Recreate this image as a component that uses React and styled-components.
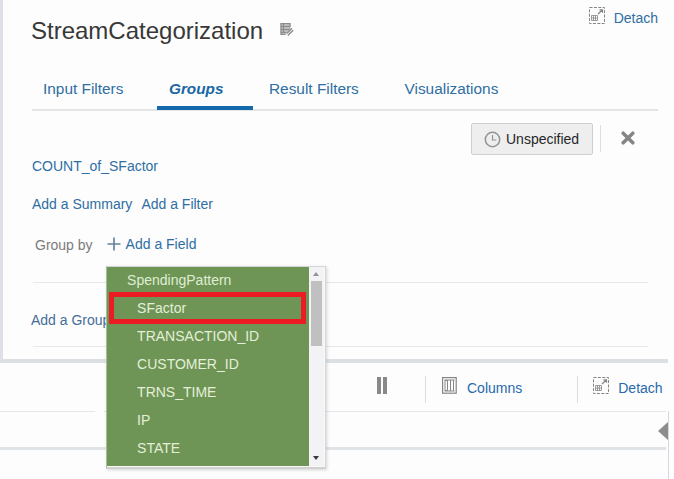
import React from "react";
import styled, { createGlobalStyle } from "styled-components";

const GlobalStyle = createGlobalStyle`
  * { box-sizing: border-box; }
  body { margin: 0; background: #fdfdfd; overflow: hidden; }
`;

const Page = styled.div`
  width: 674px;
  height: 479px;
  overflow: hidden;
  background: #fdfdfd;
  font-family: "Liberation Sans", Arial, sans-serif;
  font-size: 14px;
  line-height: 16px;
  white-space: nowrap;
`;

const EditorPanel = styled.section`
  width: 668px;
  height: 363px;
  padding-left: 29px;
  border-left: 3px solid #dedfe8;
  border-bottom: 4px solid #dcdfe4;
`;

const PanelHeader = styled.header`
  display: flex;
  align-items: flex-start;
  height: 72px;
  padding-right: 7px;
`;

const Title = styled.h1`
  margin: 17px 16px 0 -1px;
  font-size: 24px;
  line-height: 28px;
  font-weight: 400;
  color: #383838;
`;

const EditMark = styled.span`
  display: flex;
  margin-top: 22px;
`;

const Link = styled.a`
  color: #2f6ea3;
  cursor: pointer;
`;

const DetachAction = styled.span`
  display: flex;
  align-items: flex-start;
  gap: 8px;
  margin: ${(p) => p.$margin};

  ${Link} { margin-top: 3px; }
`;

const TabBar = styled.nav`
  display: flex;
  width: 626px;
  height: 39px;
  border-bottom: 2px solid #e4e5e7;
`;

const Tab = styled.button`
  flex: 0 0 ${(p) => p.$width}px;
  height: 38px;
  padding: 0 0 0 ${(p) => p.$inset}px;
  border: 0;
  border-bottom: 4px solid ${(p) => (p.$active ? "#146aab" : "transparent")};
  background: none;
  font: ${(p) => (p.$active ? "italic bold 15.3px/18px" : "15.4px/18px")} "Liberation Sans", Arial, sans-serif;
  color: ${(p) => (p.$active ? "#1b67a4" : "#2f6ea3")};
  text-align: left;
`;

const ActionRow = styled.div`
  display: flex;
  align-items: flex-start;
  justify-content: flex-end;
  height: 47px;
  padding: 12px 29px 0 0;
`;

const TimeButton = styled.button`
  display: flex;
  align-items: center;
  gap: 5px;
  width: 122px;
  height: 32px;
  padding: 0 0 0 12px;
  border: 1px solid #cfcfcf;
  border-radius: 2px;
  background: #eeeeee;
  font: 14px/16px "Liberation Sans", Arial, sans-serif;
  color: #262626;
`;

const Divider = styled.span`
  width: 1px;
  height: 27px;
  margin: ${(p) => p.$margin};
  background: #dcdde0;
`;

const CloseMark = styled.span`
  display: flex;
  margin: 8px 4px 0 0;
`;

const SummaryLine = styled.div`
  display: flex;
  gap: 9px;
  height: ${(p) => p.$height}px;
`;

const GroupByRow = styled.div`
  display: flex;
  height: 46px;
  padding-left: 3px;
`;

const Caption = styled.span`
  margin: 1px 14px 0 0;
  color: #7b7b7b;
`;

const AddField = styled.div`
  position: relative;
  display: flex;
  gap: 5px;
  color: #2f6ea3;
`;

const AddGroup = styled.div`
  width: 615px;
  height: 65px;
  margin-left: 1px;
  padding-top: 29px;
  border-top: 1px solid #e7e8ea;
  border-bottom: 1px solid #e7e8ea;

  ${Link} { margin-left: -2px; color: #456d98; }
`;

const FieldMenu = styled.div`
  position: absolute;
  z-index: 2;
  top: 30px;
  left: -1px;
  display: flex;
  width: 220px;
  height: 203px;
  border: 1px solid #d4d6d8;
  border-left-color: #a9bf9a;
  border-bottom: 2px solid #d0d2d2;
  background: #f9faf7;
  box-shadow: 1px 1px 3px #9c9ca066;
`;

const FieldList = styled.ul`
  width: 202px;
  height: 199px;
  margin: 0;
  padding: 0;
  background: #6f9556;
  list-style: none;
`;

const FieldItem = styled.li`
  height: 28px;
  padding: 5px 0 0 ${(p) => (p.$heading ? 20.5 : 30.5)}px;
  color: ${(p) => (p.$heading ? "#dfedd3" : "#e3efd9")};
`;

const Highlight = styled.span`
  position: absolute;
  top: 25px;
  left: 2px;
  width: 197px;
  height: 32px;
  border: 5px solid #ed1c24;
`;

const ScrollTrack = styled.div`
  display: flex;
  flex-direction: column;
  align-items: center;
  width: 15px;
  height: 199px;
  background: #f3f3f5;
`;

const ScrollThumb = styled.div`
  width: 11px;
  height: 65px;
  margin: 5px 0 110px;
  background: #c0c0c1;
`;

const ScrollArrow = styled.span`
  width: 0;
  height: 0;
  border: solid transparent;
  border-width: ${(p) => (p.$up ? "0 3.5px 4px" : "4px 3.5px 0")};
  border-color: ${(p) => (p.$up ? "transparent transparent #929292" : "#393939 transparent transparent")};
  margin-top: ${(p) => (p.$up ? 5 : 0)}px;
`;

const ResultsToolbar = styled.div`
  display: flex;
  align-items: flex-start;
  height: 48px;
  padding-left: 377px;

  ${Link} { color: #2869ac; }
`;

const PauseMark = styled.span`
  display: flex;
  gap: 2px;
  margin-top: 14px;

  i { width: 4px; height: 17px; background: #898989; }
`;

const ColumnsAction = styled.span`
  display: flex;
  gap: 10px;
  margin: 14px 0 0 16px;

  ${Link} { margin-top: 3px; }
`;

const TableFrame = styled.div`
  display: flex;
  width: 669px;
  height: 68px;
  border-right: 1px solid #d5d9df;
`;

const TableTop = styled.div`
  display: flex;
  align-items: flex-start;
  justify-content: flex-end;
  width: 666px;
  height: 39px;
  padding-top: 11px;
  border-bottom: 3px solid #e1e4e6;
  background: linear-gradient(#e5e6e9, #e5e6e9) 0 0 / 95px 1px no-repeat,
    linear-gradient(#e5e6e9, #e5e6e9) 104px 0 / 562px 1px no-repeat;
`;

const CollapseArrow = styled.span`
  flex: none;
  width: 10px;
  height: 18px;
  margin-right: -2px;
  background: #8d8d8d;
  clip-path: polygon(0 50%, 100% 0, 100% 100%);
`;

const tabs = [
  ["Input Filters", 125, 11],
  ["Groups", 96, 12],
  ["Result Filters", 135, 16],
  ["Visualizations", 130, 16.5],
];

const fields = ["SpendingPattern", "SFactor", "TRANSACTION_ID", "CUSTOMER_ID", "TRNS_TIME", "IP", "STATE"];

function EditIcon() {
  return (
    <svg width="16" height="16" viewBox="0 0 16 16" fill="none" stroke="#8c8c8c">
      <path d="M1.5 1h10v7L8 12.5H1.5z" fill="#bcbcbc" stroke="none" />
      <path d="M1.5 1.5h10M1.5 4.5h10M1.5 7.5h9M1.5 10.5h6M1.5 12.5h5M2 1v12M4.5 1v10M11 1v4" strokeWidth="1.2" />
      <path d="m7 14 1-3.5 5-4.9 2 2-5 6z" fill="#fdfdfd" stroke="none" />
      <path d="m8 11.3 5-5M8.8 13.5l5.4-5.2" strokeWidth="1.5" />
    </svg>
  );
}

function DetachIcon() {
  return (
    <svg width="17" height="17" viewBox="0 0 17 17" fill="none" stroke="#858585">
      <rect x=".5" y=".5" width="15" height="16" strokeDasharray="3 1.4" />
      <path d="M2.5 8.5h6v5h-6zM2.5 11h6M4.5 8.5v5M6.5 8.5v5" strokeWidth=".8" />
      <path d="m9 7 4.5-4.2M10.5 2.8h3v3" strokeWidth="1.2" />
    </svg>
  );
}

function ColumnsIcon() {
  return (
    <svg width="15" height="17" viewBox="0 0 15 17" fill="none" stroke="#858585">
      <rect x=".6" y=".6" width="13.6" height="15.6" strokeWidth="1.2" />
      <path d="M3 3.5h2.5v10H3zM2.5 3h10M2.5 14h10M8.5 3v11M11.5 3v11" />
    </svg>
  );
}

function ClockIcon() {
  return (
    <svg width="17" height="17" viewBox="0 0 17 17" fill="none" stroke="#949494">
      <circle cx="8.5" cy="8.5" r="7.2" strokeWidth="1.5" />
      <path d="M8.5 4v5h3.8" strokeWidth="1.2" />
    </svg>
  );
}

function CloseIcon() {
  return (
    <svg width="14" height="14" viewBox="0 0 14 14" stroke="#858585" strokeWidth="3.5" strokeLinecap="round">
      <path d="m2.2 2.2 9.6 9.6m0-9.6-9.6 9.6" />
    </svg>
  );
}

function PlusIcon() {
  return (
    <svg width="14" height="16" viewBox="0 0 14 16" stroke="#68839a" strokeWidth="1.7">
      <path d="M7 1.5v13M.5 8h13" />
    </svg>
  );
}

function Detach({ margin }) {
  return (
    <DetachAction $margin={margin}>
      <DetachIcon />
      <Link>Detach</Link>
    </DetachAction>
  );
}

function FieldPicker() {
  return (
    <FieldMenu>
      <FieldList>
        {fields.map((field, index) => (
          <FieldItem key={field} $heading={index === 0}>{field}</FieldItem>
        ))}
      </FieldList>
      <ScrollTrack>
        <ScrollArrow $up />
        <ScrollThumb />
        <ScrollArrow />
      </ScrollTrack>
      <Highlight />
    </FieldMenu>
  );
}

export default function App() {
  return (
    <Page>
      <GlobalStyle />
      <EditorPanel>
        <PanelHeader>
          <Title>StreamCategorization</Title>
          <EditMark><EditIcon /></EditMark>
          <Detach margin="7px 3px 0 auto" />
        </PanelHeader>
        <TabBar>
          {tabs.map(([label, width, inset]) => (
            <Tab key={label} $width={width} $inset={inset} $active={label === "Groups"}>{label}</Tab>
          ))}
        </TabBar>
        <ActionRow>
          <TimeButton><ClockIcon />Unspecified</TimeButton>
          <Divider $margin="2px 20px 0 7px" />
          <CloseMark><CloseIcon /></CloseMark>
        </ActionRow>
        <SummaryLine $height={38}><Link>COUNT_of_SFactor</Link></SummaryLine>
        <SummaryLine $height={40}><Link>Add a Summary</Link><Link>Add a Filter</Link></SummaryLine>
        <GroupByRow>
          <Caption>Group by</Caption>
          <AddField>
            <PlusIcon />
            <Link>Add a Field</Link>
            <FieldPicker />
          </AddField>
        </GroupByRow>
        <AddGroup><Link>Add a Group</Link></AddGroup>
      </EditorPanel>
      <ResultsToolbar>
        <PauseMark><i /><i /></PauseMark>
        <Divider $margin="13px 0 0 38px" />
        <ColumnsAction><ColumnsIcon /><Link>Columns</Link></ColumnsAction>
        <Divider $margin="13px 0 0 55px" />
        <Detach margin="14px 0 0 15px" />
      </ResultsToolbar>
      <TableFrame>
        <TableTop><CollapseArrow /></TableTop>
      </TableFrame>
    </Page>
  );
}
